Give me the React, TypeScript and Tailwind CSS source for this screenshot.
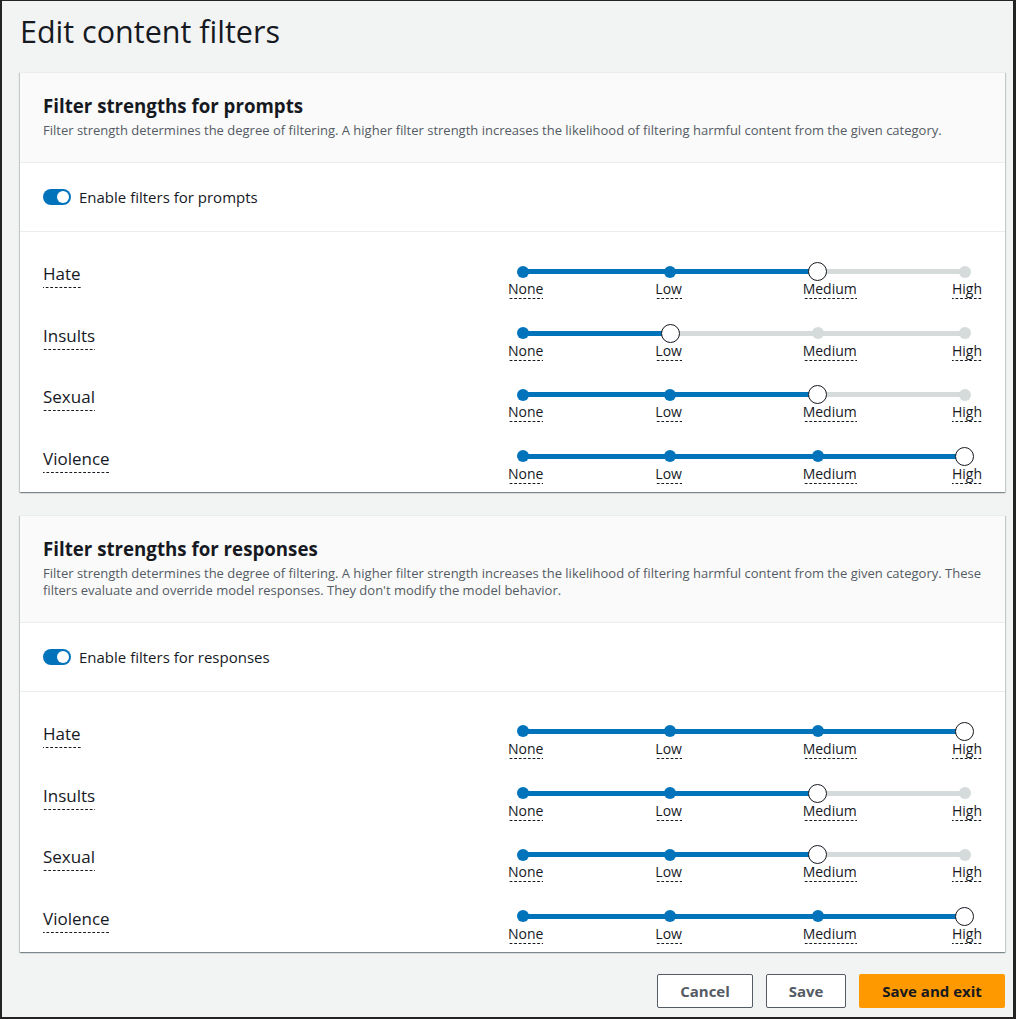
import React from "react"

const levels = ["None", "Low", "Medium", "High"]
const step = 147.33
const origin = 14

type Row = { label: string; value: number }

const promptRows: Row[] = [
  { label: "Hate", value: 2 },
  { label: "Insults", value: 1 },
  { label: "Sexual", value: 2 },
  { label: "Violence", value: 3 }
]

const responseRows: Row[] = [
  { label: "Hate", value: 3 },
  { label: "Insults", value: 2 },
  { label: "Sexual", value: 2 },
  { label: "Violence", value: 3 }
]

const dashed =
  "bg-[linear-gradient(to_right,#16191f_60%,transparent_60%)] bg-[length:4.6px_1px] bg-repeat-x bg-bottom"

function Toggle() {
  return (
    <span className="flex h-[16px] w-[28px] items-center justify-end rounded-full bg-[#0073bb] px-[2px]">
      <span className="h-[12px] w-[12px] rounded-full bg-white" />
    </span>
  )
}

function Slider({ value }: { value: number }) {
  return (
    <div className="relative h-[38px] w-[477px] shrink-0">
      <div
        className="absolute top-[7px] h-[5px] rounded-full bg-[#d5dbdb]"
        style={{ left: origin, width: step * 3 }}
      />
      <div
        className="absolute top-[7px] h-[5px] rounded-full bg-[#0073bb]"
        style={{ left: origin, width: step * value }}
      />
      {levels.map((lvl, i) =>
        i === value ? (
          <span
            key={lvl}
            className="absolute top-0 h-[19px] w-[19px] rounded-full border border-[#16191f] bg-white"
            style={{ left: origin + step * i - 9.5 }}
          />
        ) : (
          <span
            key={lvl}
            className={`absolute top-[3.5px] h-[12px] w-[12px] rounded-full ${i < value ? "bg-[#0073bb]" : "bg-[#d5dbdb]"}`}
            style={{ left: origin + step * i - 6 }}
          />
        )
      )}
      {levels.map((lvl, i) => (
        <span
          key={lvl + "-l"}
          className={`absolute top-[18px] pb-[2px] text-[14px] leading-[17px] text-[#16191f] ${dashed}`}
          style={{ left: step * i + (i === 3 ? 1 : -1) }}
        >
          {lvl}
        </span>
      ))}
    </div>
  )
}

function FilterCard({
  title,
  desc,
  toggle,
  rows
}: {
  title: string
  desc: string
  toggle: string
  rows: Row[]
}) {
  return (
    <section className="border-t border-[#eaeded] bg-white shadow-[0_1px_1px_0_rgba(0,28,36,0.3),1px_1px_1px_0_rgba(0,28,36,0.15),-1px_1px_1px_0_rgba(0,28,36,0.15)]">
      <div className="border-b border-[#eaeded] bg-[#fafafa] px-[23px] pb-[23px] pt-[22px]">
        <h2 className="text-[18.7px] font-bold leading-[22px] text-[#16191f]">{title}</h2>
        <p className="mt-[5px] text-[13px] leading-[17px] text-[#545b64]">{desc}</p>
      </div>
      <div className="flex h-[69px] items-center gap-[8px] border-b border-[#eaeded] px-[23px]">
        <Toggle />
        <span className="text-[15px] text-[#16191f]">{toggle}</span>
      </div>
      <div className="flex flex-col gap-[23.67px] pb-[7px] pl-[23px] pr-[19px] pt-[30px]">
        {rows.map(r => (
          <div key={r.label} className="flex items-start justify-between">
            <span className={`mt-px pb-[3px] text-[17px] leading-[22px] text-[#16191f] ${dashed}`}>
              {r.label}
            </span>
            <Slider value={r.value} />
          </div>
        ))}
      </div>
    </section>
  )
}

export default function App() {
  return (
    <div
      className="box-border flex h-[1019px] w-[1016px] flex-col border-b-2 border-l-2 border-r-[3px] border-t border-[#232323] bg-[#f2f3f3] pl-[18px] pr-[8px]"
      style={{ fontFamily: '"Open Sans", "Noto Sans", sans-serif' }}
    >
      <h1 className="mt-[11px] text-[30.5px] leading-[38px] text-[#16191f]">Edit content filters</h1>
      <div className="mt-[22px] flex flex-col gap-[23px]">
        <FilterCard
          title="Filter strengths for prompts"
          desc="Filter strength determines the degree of filtering. A higher filter strength increases the likelihood of filtering harmful content from the given category."
          toggle="Enable filters for prompts"
          rows={promptRows}
        />
        <FilterCard
          title="Filter strengths for responses"
          desc="Filter strength determines the degree of filtering. A higher filter strength increases the likelihood of filtering harmful content from the given category. These filters evaluate and override model responses. They don't modify the model behavior."
          toggle="Enable filters for responses"
          rows={responseRows}
        />
      </div>
      <div className="mt-[22px] flex justify-end gap-[13px]">
        <button className="h-[34px] w-[96px] rounded-[2px] border border-[#545b64] bg-white text-[15px] font-bold text-[#545b64]">
          Cancel
        </button>
        <button className="h-[34px] w-[80px] rounded-[2px] border border-[#545b64] bg-white text-[15px] font-bold text-[#545b64]">
          Save
        </button>
        <button className="h-[34px] w-[146px] rounded-[2px] bg-[#ff9900] text-[15px] font-bold text-[#16191f]">
          Save and exit
        </button>
      </div>
    </div>
  )
}
